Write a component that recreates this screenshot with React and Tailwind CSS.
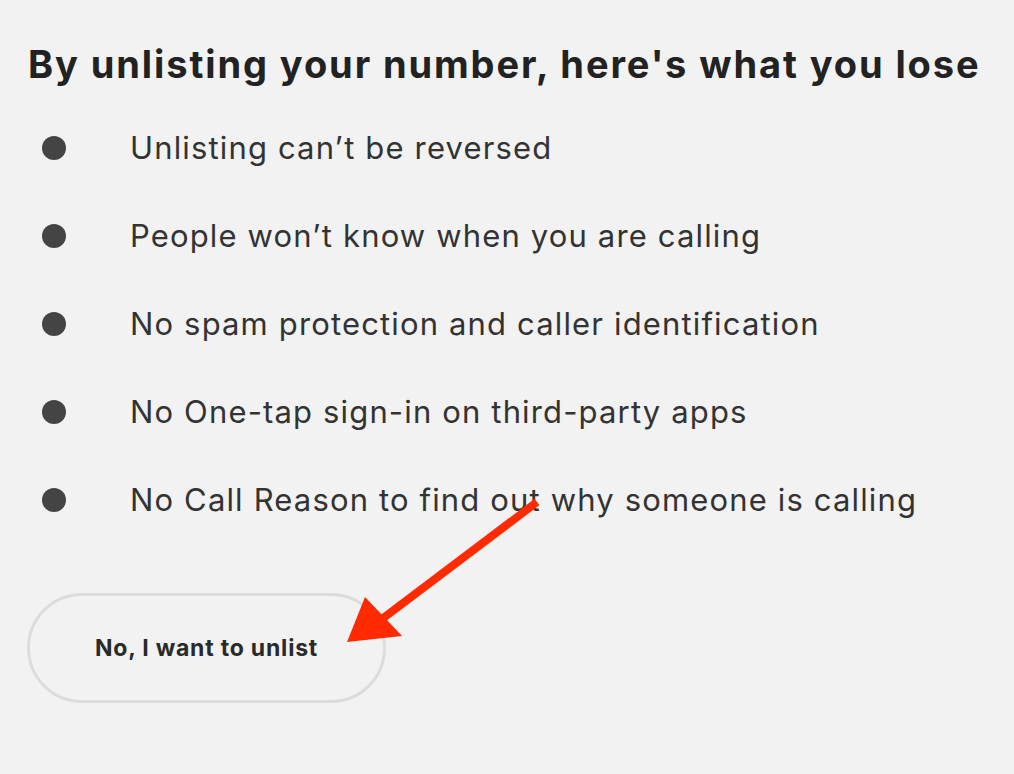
const items = [
  'Unlisting can\u2019t be reversed',
  'People won\u2019t know when you are calling',
  'No spam protection and caller identification',
  'No One-tap sign-in on third-party apps',
  'No Call Reason to find out why someone is calling',
];

export default function App() {
  return (
    <div className="relative min-h-[774px] w-full bg-[#f2f2f2] px-[28px] pt-[40px] font-['Inter',sans-serif]">
      <h1 className="text-[38px] font-bold leading-[48px] text-[#222] tracking-[1.9px]">
        By unlisting your number, here's what you lose
      </h1>

      <ul className="mt-[16px] flex flex-col">
        {items.map((item) => (
          <li key={item} className="flex h-[88px] items-center">
            <span className="ml-[14px] h-[24px] w-[24px] shrink-0 rounded-full bg-[#444]" />
            <span className="ml-[64px] text-[31px] text-[#333] tracking-[1.15px]">{item}</span>
          </li>
        ))}
      </ul>

      <button className="mt-[49px] flex h-[110px] w-[359px] -ml-[1px] items-center justify-center rounded-full border-[3px] border-[#dcdcdc] text-[23px] font-bold text-[#2a2a2a] tracking-[0.8px]">
        No, I want to unlist
      </button>

      {/* annotation arrow */}
      <svg className="pointer-events-none absolute left-0 top-0" width="1014" height="774">
        <line x1="537" y1="502" x2="378" y2="622" stroke="#ff2a00" strokeWidth="8" />
        <polygon points="347,642 365,597 402,636" fill="#ff2a00" />
      </svg>
    </div>
  );
}
